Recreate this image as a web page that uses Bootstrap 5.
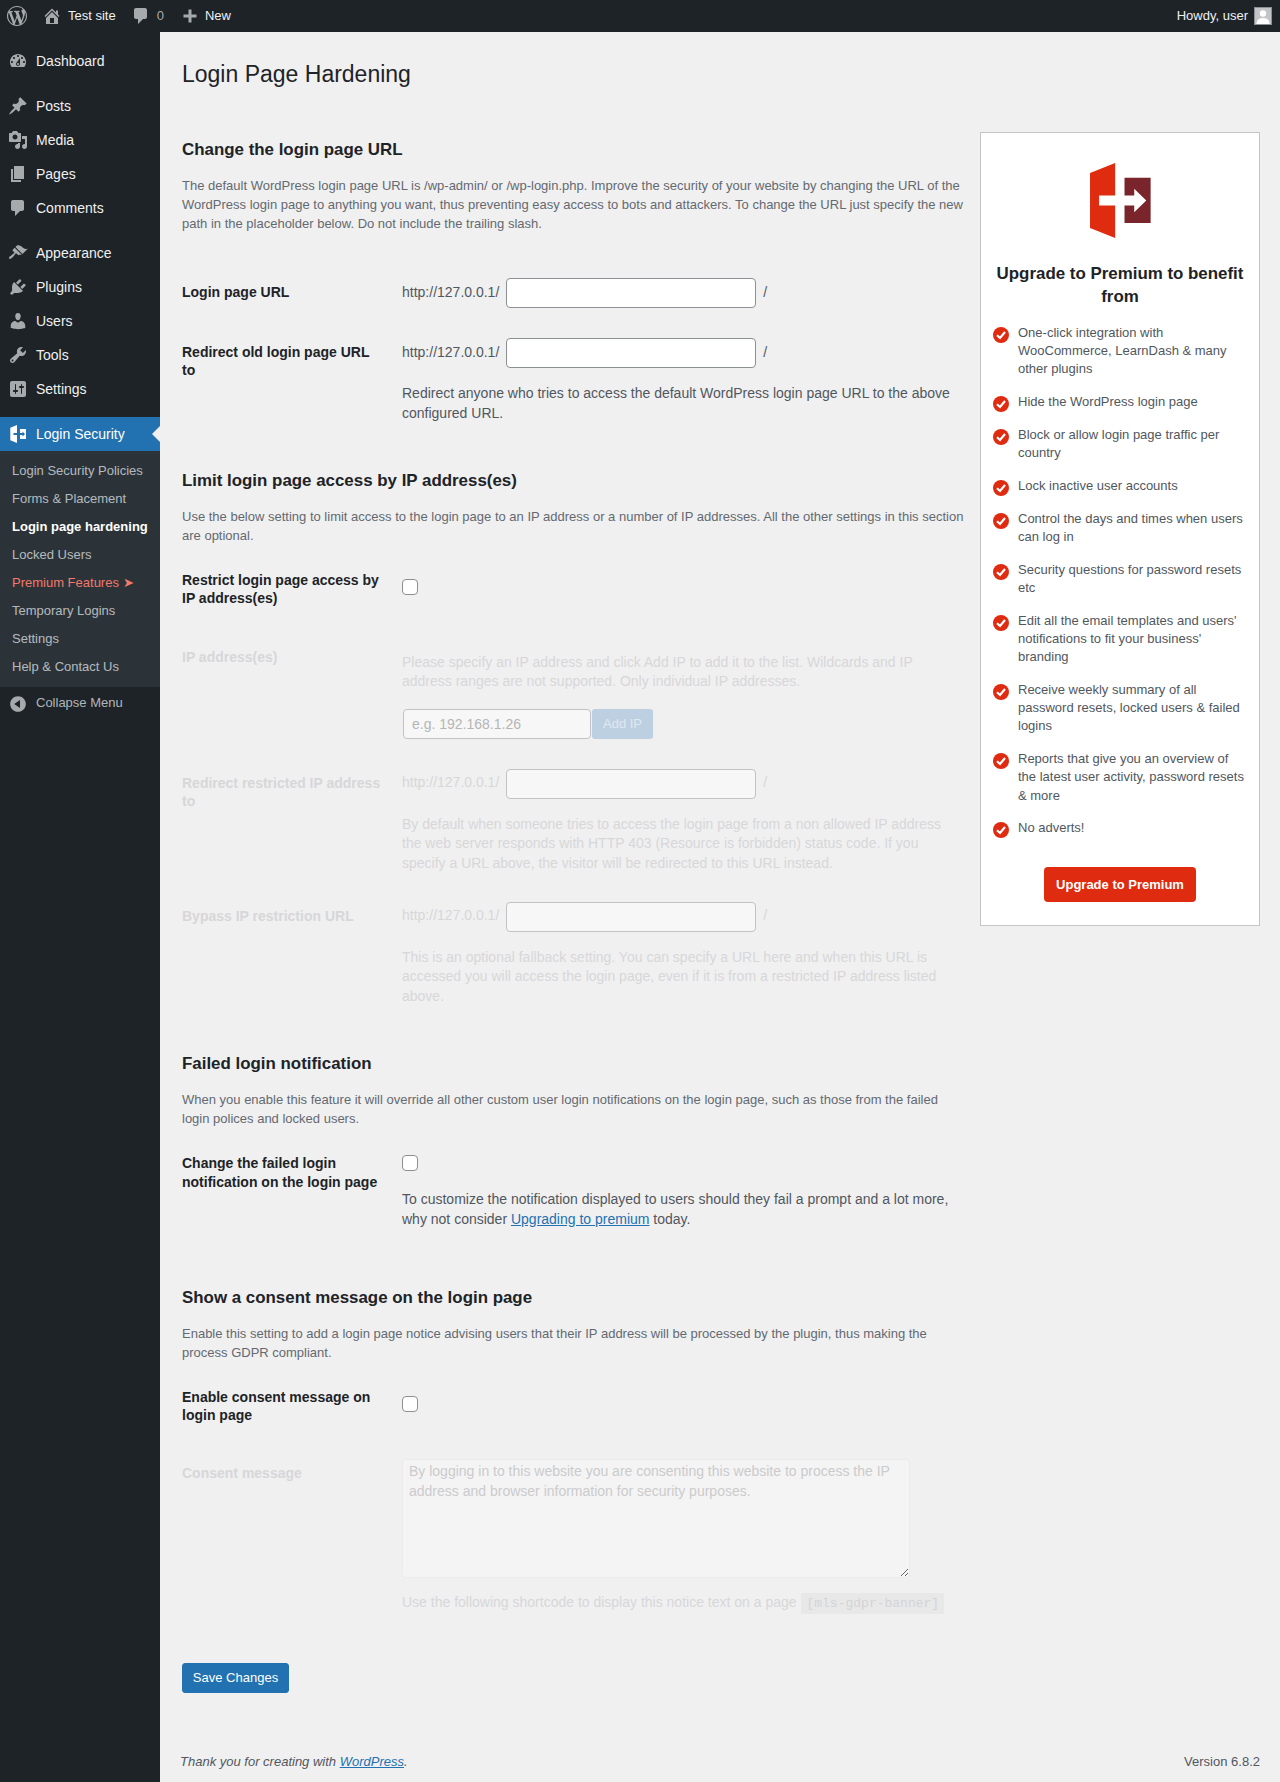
<!DOCTYPE html>
<html lang="en">
<head>
<meta charset="utf-8">
<title>Login Page Hardening</title>
<link href="https://cdn.jsdelivr.net/npm/bootstrap@5.3.0/dist/css/bootstrap.min.css" rel="stylesheet">
<style>
body{font-family:"Liberation Sans",Arial,sans-serif;font-size:13px;line-height:1.4;background:#f0f0f1;color:#3c434a;min-height:1782px}
a{color:#2271b1}
.wpbar{height:32px;background:#1d2327;color:#f0f0f1;font-size:13px;line-height:32px}
.wpbar svg{fill:#a7aaad;display:block;flex:none}
.bar-wp{padding:0 7px;height:32px}
.bar-home{padding-left:8px;gap:6px;height:32px}
.bar-com{padding-left:15px;gap:6px;height:32px}
.bar-new{padding-left:16px;gap:5px;height:32px}
.bar-num{color:#a7aaad}
.bar-user{padding-right:8px}
.ava{width:18px;height:18px;background:#c3c4c7;border:1px solid #8c8f94;margin-left:6px;overflow:hidden}
.ava svg{fill:#fff}
.shell{min-height:1750px}
.sidemenu{width:160px;flex:none;background:#1d2327;padding-top:12px}
.mitem{height:34px;padding-left:8px;font-size:14px;color:#f0f0f1;gap:8px}
.mitem span{padding-top:2px}
.mitem svg{fill:#a7aaad;flex:none;width:20px;height:20px}
.msep{height:11px}
.mactive{background:#2271b1;color:#fff;position:relative}
.mactive svg{fill:#fff}
.mactive::after{content:"";position:absolute;right:0;top:9px;border:8px solid transparent;border-right-color:#f0f0f1;border-left-width:0}
.subm{background:#2c3338;padding:6px 0 6px}
.subm div{height:28px;line-height:28px;padding-left:12px;font-size:13px;color:rgba(240,246,252,.7)}
.subm .subon{color:#fff;font-weight:700}
.subm .subprem{color:#f2796b}
.collapse-row{height:34px;padding-left:8px;gap:8px;color:rgba(240,246,252,.7);font-size:13px}
.collapse-row span{padding-bottom:2px}
.collapse-row svg{fill:#a7aaad;width:20px;height:20px;flex:none}
.mainwrap{flex:1 1 auto;min-width:0;padding:27px 20px 0 22px;position:relative}
.ttl{font-size:23px;font-weight:400;line-height:30px;color:#1d2327;margin:0}
.pane{gap:16px;margin-top:43px}
.leftcol{width:782px;flex:none;padding-top:7px}
.hd2{font-size:16.9px;font-weight:700;line-height:22px;color:#1d2327;margin:0 0 15px}
.descr{font-size:13px;line-height:19px;color:#646970;margin:0}
.lab{width:200px;margin-right:20px;flex:none;font-size:14px;line-height:18.2px;font-weight:700;color:#1d2327}
.lab-in{padding-top:5px}
.val{font-size:14px;line-height:20px;color:#50575e}
.val .vtx{padding-bottom:3px}
.urlbox{width:250px;height:30px;border:1px solid #8c8f94;border-radius:4px;background:#fff;margin:0 7px}
.hint{font-size:14px;line-height:19.6px;color:#50575e;margin:0}
.chk{width:16px;height:16px;border:1px solid #8c8f94;border-radius:4px;background:#fff;display:block;appearance:none;margin:0}
.h-15{margin-top:15px}
.h-16{margin-top:16px}
.h-19{margin-top:19px}
.off{color:#d7d7d8}
.off .urlbox{background:#f7f7f7;border-color:#c2c2c5}
.off .hint{color:#d7d7d8}
.ipbox{width:188px;height:30px;border:1px solid #c2c2c5;border-radius:4px;background:#f7f7f7;padding:0 8px;font-size:14px;color:#b5b5b5;margin-left:1px}
.ipbox::placeholder{color:#b5b5b5;opacity:1}
.ipbtn{width:61px;height:30px;margin-left:1px;border:0;border-radius:3px;background:#bcd0e2;color:#e0e8f0;font-size:13px;padding:0}
.consentbox{display:block;width:508px;height:119px;border:1px solid #ebebec;border-radius:4px;background:#f4f4f4;color:#cbcbcc;font-size:14px;line-height:19.6px;padding:2px 6px}
.consentbox::placeholder{color:#cbcbcc;opacity:1}
.shortc{font-family:"Liberation Mono",monospace;font-size:13px;background:#e8e8e9;color:#d4d4d5;padding:3px 5px;margin-left:1px}
.savebtn{background:#2271b1;color:#fff;border:1px solid #2271b1;border-radius:3px;font-size:13px;line-height:28px;height:30px;width:107px;padding:0;display:block}
.upbox{width:280px;flex:none;background:#fff;border:1px solid #c3c4c7;padding:30px 12px 0;height:794px}
.uplogo{display:block;margin:0 auto}
.upttl{font-size:16.9px;font-weight:700;line-height:23px;color:#1d2327;text-align:center;margin:24px 0 0}
.uplist{margin:16px 0 0;padding:0;list-style:none}
.uplist li{font-size:13px;line-height:18.2px;color:#50575e;padding-left:25px;position:relative;margin-bottom:14.6px}
.uplist li svg{position:absolute;left:0;top:3px}
.upbtn{display:block;width:152px;height:35px;line-height:35px;margin:29px auto 0;background:#df2b10;color:#fff;font-size:13px;font-weight:700;border-radius:4px;text-align:center;text-decoration:none}
.ft{position:absolute;left:20px;right:20px;top:1721px;font-size:13px;color:#50575e}
.m45{margin-top:45px}.m30{margin-top:30px}.m47{margin-top:47px}.m26{margin-top:26px}.m40{margin-top:40px}.m17{margin-top:17px}.m28{margin-top:28px}.m57{margin-top:57px}.m35{margin-top:35px}.m49{margin-top:49px}
.c7{padding-top:8px}.c8{padding-top:1px}
</style>
</head>
<body>
<div class="wpbar d-flex align-items-center justify-content-between">
  <div class="d-flex align-items-center">
    <div class="bar-wp d-flex align-items-center"><svg width="20" height="20" viewBox="0 0 20 20"><path d="M20 10c0-5.51-4.49-10-10-10C4.48 0 0 4.49 0 10c0 5.52 4.48 10 10 10 5.51 0 10-4.48 10-10zM7.78 15.37L4.37 6.22c.55-.02 1.17-.08 1.17-.08.5-.06.44-1.13-.06-1.11 0 0-1.45.11-2.37.11-.18 0-.37 0-.58-.01C4.12 2.69 6.87 1.11 10 1.11c2.33 0 4.45.87 6.05 2.34-.68-.11-1.65.39-1.65 1.58 0 .74.45 1.36.9 2.1.35.61.55 1.36.55 2.46 0 1.49-1.4 5-1.4 5l-3.03-8.37c.54-.02.82-.17.82-.17.5-.05.44-1.25-.06-1.22 0 0-1.44.12-2.38.12-.87 0-2.33-.12-2.33-.12-.5-.03-.56 1.2-.06 1.22l.92.08 1.26 3.41zM17.41 10c.24-.64.74-1.87.43-4.25.7 1.29 1.05 2.71 1.05 4.25 0 3.29-1.73 6.24-4.4 7.78.97-2.59 1.94-5.2 2.92-7.78zM6.1 18.09C3.12 16.65 1.11 13.53 1.11 10c0-1.3.23-2.48.72-3.59C3.25 10.3 4.67 14.2 6.1 18.09zm4.03-6.63l2.58 6.98c-.86.29-1.76.45-2.71.45-.79 0-1.57-.11-2.29-.33.81-2.38 1.62-4.74 2.42-7.1z"/></svg></div>
    <div class="bar-home d-flex align-items-center"><svg width="20" height="20" viewBox="0 0 20 20"><path d="M16 8.500l1.530 1.530-1.060 1.060L10 4.620l-6.470 6.470-1.060-1.060L10 2.500l4 4v-2h2v4zm-6-2.460l6 5.990V18H4v-5.970zM12 17v-5H8v5h4z"/></svg><span>Test site</span></div>
    <div class="bar-com d-flex align-items-center"><svg width="20" height="20" viewBox="0 0 20 20"><path d="M5 2h9c1.100 0 2 .9 2 2v7c0 1.100-.9 2-2 2h-2l-5 5v-5H5c-1.100 0-2-.9-2-2V4c0-1.100.9-2 2-2z"/></svg><span class="bar-num">0</span></div>
    <div class="bar-new d-flex align-items-center"><svg width="20" height="20" viewBox="0 0 20 20"><path d="M16.500 8.500v3h-5v5h-3v-5h-5v-3h5v-5h3v5z"/></svg><span>New</span></div>
  </div>
  <div class="bar-user d-flex align-items-center"><span>Howdy, user</span><div class="ava"><svg width="16" height="16" viewBox="0 0 16 16"><circle cx="8" cy="5.500" r="3.200"/><path d="M1.500 16c0-4 2.500-6 6.500-6s6.500 2 6.500 6z"/></svg></div></div>
</div>
<div class="shell d-flex">
  <nav class="sidemenu d-flex flex-column">
    <div class="mitem d-flex align-items-center"><svg viewBox="0 0 20 20"><path d="M3.760 16h12.480c1.100-1.370 1.760-3.110 1.760-5 0-4.420-3.580-8-8-8s-8 3.580-8 8c0 1.890.66 3.630 1.760 5zM10 4c.55 0 1 .45 1 1s-.45 1-1 1-1-.45-1-1 .45-1 1-1zM6 6c.55 0 1 .45 1 1s-.45 1-1 1-1-.45-1-1 .45-1 1-1zm8 0c.55 0 1 .45 1 1s-.45 1-1 1-1-.45-1-1 .45-1 1-1zm-5.370 5.550L12 7v6c0 1.100-.9 2-2 2s-2-.9-2-2c0-.57.24-1.080.63-1.450zM4 10c.55 0 1 .45 1 1s-.45 1-1 1-1-.45-1-1 .45-1 1-1zm12 0c.55 0 1 .45 1 1s-.45 1-1 1-1-.45-1-1 .45-1 1-1zm-5 3c0-.55-.45-1-1-1s-1 .45-1 1 .45 1 1 1 1-.45 1-1z" fill-rule="evenodd"/></svg><span>Dashboard</span></div>
    <div class="msep"></div>
    <div class="mitem d-flex align-items-center"><svg viewBox="0 0 20 20"><path d="M10.440 3.020l1.820-1.820 6.360 6.350-1.830 1.820c-1.050-.68-2.480-.57-3.410.36l-.75.75c-.92.93-1.040 2.350-.35 3.410l-1.830 1.820-2.410-2.410-2.800 2.790c-.42.42-3.380 2.710-3.800 2.290s1.860-3.390 2.280-3.810l2.790-2.790L4.100 9.360l1.830-1.820c1.050.69 2.480.57 3.400-.36l.75-.75c.93-.92 1.050-2.350.36-3.410z"/></svg><span>Posts</span></div>
    <div class="mitem d-flex align-items-center"><svg viewBox="0 0 20 20"><path fill-rule="evenodd" d="M13 11V4c0-.55-.45-1-1-1h-1.670L9 1H5L3.670 3H2c-.55 0-1 .45-1 1v7c0 .55.45 1 1 1h10c.55 0 1-.45 1-1zM7 4.500c1.380 0 2.500 1.120 2.500 2.500S8.380 9.500 7 9.500 4.500 8.380 4.500 7 5.620 4.500 7 4.500zM14 6h5v10.500c0 1.380-1.120 2.500-2.500 2.500S14 17.880 14 16.500s1.120-2.500 2.500-2.500c.17 0 .34.02.5.05V9h-3V6zm-4 8.050V13h2v3.500c0 1.380-1.120 2.500-2.500 2.500S7 17.880 7 16.500 8.120 14 9.500 14c.17 0 .34.02.5.05z"/></svg><span>Media</span></div>
    <div class="mitem d-flex align-items-center"><svg viewBox="0 0 20 20"><path d="M6 15V2h10v13H6zm-1 1h8v2H3V5h2v11z"/></svg><span>Pages</span></div>
    <div class="mitem d-flex align-items-center"><svg viewBox="0 0 20 20"><path d="M5 2h9c1.100 0 2 .9 2 2v7c0 1.100-.9 2-2 2h-2l-5 5v-5H5c-1.100 0-2-.9-2-2V4c0-1.100.9-2 2-2z"/></svg><span>Comments</span></div>
    <div class="msep"></div>
    <div class="mitem d-flex align-items-center"><svg viewBox="0 0 20 20"><path d="M14.480 11.060L7.410 3.990l1.500-1.500c.5-.56 2.300-.47 3.510.32 1.210.8 1.430 1.280 2.910 2.100 1.180.64 2.450 1.260 4.450.85zm-.71.71L6.700 4.700 4.930 6.470c-.39.39-.39 1.020 0 1.410l1.060 1.060c.39.39.39 1.030 0 1.420-.6.6-1.430 1.110-2.210 1.690-.35.26-.7.53-1.010.84C1.430 13.230.4 14.810 1.200 15.600c.79.8 2.370-.23 3.700-1.570.31-.31.58-.66.85-1.020.57-.78 1.080-1.610 1.690-2.210.39-.39 1.020-.39 1.410 0l1.060 1.060c.39.39 1.020.39 1.410 0z"/></svg><span>Appearance</span></div>
    <div class="mitem d-flex align-items-center"><svg viewBox="0 0 20 20"><path d="M13.110 4.360L9.870 7.600 8 5.730l3.240-3.240c.35-.34 1.050-.2 1.560.32.52.51.66 1.210.31 1.550zm-8 1.770l.91-1.120 9.010 9.010-1.190.84c-.71.71-2.630 1.160-3.820 1.160H6.140L4.900 17.260c-.59.59-1.540.59-2.120 0-.59-.58-.59-1.530 0-2.120l1.240-1.240v-3.880c0-1.130.4-3.190 1.090-3.890zm7.260 3.970l3.240-3.240c.34-.35 1.040-.21 1.550.31.52.51.66 1.210.31 1.550l-3.240 3.250z"/></svg><span>Plugins</span></div>
    <div class="mitem d-flex align-items-center"><svg viewBox="0 0 20 20"><path d="M10 9.250c-2.270 0-2.730-3.440-2.730-3.440C7 4.020 7.820 2 9.970 2c2.160 0 2.980 2.020 2.710 3.810 0 0-.41 3.440-2.680 3.440zm0 2.570L12.720 10c2.390 0 4.520 2.330 4.520 4.530v2.490s-3.650 1.130-7.240 1.130c-3.650 0-7.240-1.130-7.240-1.130v-2.490c0-2.250 1.940-4.480 4.470-4.480z"/></svg><span>Users</span></div>
    <div class="mitem d-flex align-items-center"><svg viewBox="0 0 20 20"><path fill-rule="evenodd" d="M16.680 9.770c-1.340 1.340-3.300 1.670-4.950.99l-5.410 6.520c-.99.99-2.590.99-3.580 0s-.99-2.590 0-3.570l6.520-5.420c-.68-1.650-.35-3.610.99-4.950 1.280-1.280 3.120-1.620 4.720-1.060l-2.890 2.890 2.820 2.820 2.860-2.870c.53 1.580.18 3.390-1.080 4.650zM3.810 16.210c.4.39 1.040.39 1.430 0 .4-.4.4-1.040 0-1.430-.39-.4-1.030-.4-1.430 0-.39.39-.39 1.030 0 1.430z"/></svg><span>Tools</span></div>
    <div class="mitem d-flex align-items-center"><svg viewBox="0 0 20 20"><path fill-rule="evenodd" d="M18 16V4c0-1.100-.9-2-2-2H4c-1.100 0-2 .9-2 2v12c0 1.100.9 2 2 2h12c1.100 0 2-.9 2-2zM8 11h1c.55 0 1 .45 1 1s-.45 1-1 1H8v1.500c0 .28-.22.5-.5.5s-.5-.22-.5-.5V13H6c-.55 0-1-.45-1-1s.45-1 1-1h1V5.500c0-.28.22-.5.5-.5s.5.22.5.5V11zm5-2h-1c-.55 0-1-.45-1-1s.45-1 1-1h1V5.500c0-.28.22-.5.5-.5s.5.22.5.5V7h1c.55 0 1 .45 1 1s-.45 1-1 1h-1v5.500c0 .28-.22.5-.5.5s-.5-.22-.5-.5V9z"/></svg><span>Settings</span></div>
    <div class="msep"></div>
    <div class="mitem mactive d-flex align-items-center"><svg viewBox="0 0 20 20"><path d="M2.300 3.800 9 1v8H5.500v2H9v8l-6.700-2.800z"/><path fill-rule="evenodd" d="M12 5h6v10h-6v-4h2.500v1.500L17 10l-2.500-2.500V9H12z"/></svg><span>Login Security</span></div>
    <div class="subm">
      <div>Login Security Policies</div>
      <div>Forms &amp; Placement</div>
      <div class="subon">Login page hardening</div>
      <div>Locked Users</div>
      <div class="subprem">Premium Features ➤</div>
      <div>Temporary Logins</div>
      <div>Settings</div>
      <div>Help &amp; Contact Us</div>
    </div>
    <div class="collapse-row d-flex align-items-center"><svg viewBox="0 0 20 20"><path fill-rule="evenodd" d="M10 2.160c4.330 0 7.840 3.510 7.840 7.840s-3.510 7.840-7.840 7.840S2.160 14.330 2.160 10 5.710 2.160 10 2.160zm2 11.720V6.120L6.180 9.970z"/></svg><span>Collapse Menu</span></div>
  </nav>
  <main class="mainwrap">
    <h1 class="ttl">Login Page Hardening</h1>
    <div class="pane d-flex align-items-start">
      <div class="leftcol">
        <h2 class="hd2">Change the login page URL</h2>
        <p class="descr">The default WordPress login page URL is /wp-admin/ or /wp-login.php. Improve the security of your website by changing the URL of the WordPress login page to anything you want, thus preventing easy access to bots and attackers. To change the URL just specify the new path in the placeholder below. Do not include the trailing slash.</p>
        <div class="d-flex m45">
          <div class="lab lab-in">Login page URL</div>
          <div class="val d-flex align-items-center"><span class="vtx">http://127.0.0.1/</span><span class="urlbox"></span><span class="vtx">/</span></div>
        </div>
        <div class="d-flex m30">
          <div class="lab lab-in">Redirect old login page URL to</div>
          <div>
            <div class="val d-flex align-items-center"><span class="vtx">http://127.0.0.1/</span><span class="urlbox"></span><span class="vtx">/</span></div>
            <p class="hint h-16">Redirect anyone who tries to access the default WordPress login page URL to the above configured URL.</p>
          </div>
        </div>
        <h2 class="hd2 m47">Limit login page access by IP address(es)</h2>
        <p class="descr">Use the below setting to limit access to the login page to an IP address or a number of IP addresses. All the other settings in this section are optional.</p>
        <div class="d-flex m26">
          <div class="lab">Restrict login page access by IP address(es)</div>
          <div class="c7"><input class="chk" type="checkbox"></div>
        </div>
        <div class="off">
          <div class="d-flex m40">
            <div class="lab off">IP address(es)</div>
            <div>
              <p class="hint lab-in">Please specify an IP address and click Add IP to add it to the list. Wildcards and IP address ranges are not supported. Only individual IP addresses.</p>
              <div class="d-flex m17"><input class="ipbox" placeholder="e.g. 192.168.1.26"><button class="ipbtn">Add IP</button></div>
            </div>
          </div>
          <div class="d-flex m30">
            <div class="lab off lab-in">Redirect restricted IP address to</div>
            <div>
              <div class="val off d-flex align-items-center"><span class="vtx off">http://127.0.0.1/</span><span class="urlbox"></span><span class="vtx off">/</span></div>
              <p class="hint h-16">By default when someone tries to access the login page from a non allowed IP address the web server responds with HTTP 403 (Resource is forbidden) status code. If you specify a URL above, the visitor will be redirected to this URL instead.</p>
            </div>
          </div>
          <div class="d-flex m28">
            <div class="lab off lab-in">Bypass IP restriction URL</div>
            <div>
              <div class="val off d-flex align-items-center"><span class="vtx off">http://127.0.0.1/</span><span class="urlbox"></span><span class="vtx off">/</span></div>
              <p class="hint h-16">This is an optional fallback setting. You can specify a URL here and when this URL is accessed you will access the login page, even if it is from a restricted IP address listed above.</p>
            </div>
          </div>
        </div>
        <h2 class="hd2 m47">Failed login notification</h2>
        <p class="descr">When you enable this feature it will override all other custom user login notifications on the login page, such as those from the failed login polices and locked users.</p>
        <div class="d-flex m26">
          <div class="lab">Change the failed login notification on the login page</div>
          <div>
            <div class="c8"><input class="chk" type="checkbox"></div>
            <p class="hint h-19">To customize the notification displayed to users should they fail a prompt and a lot more, why not consider <a href="#">Upgrading to premium</a> today.</p>
          </div>
        </div>
        <h2 class="hd2 m57">Show a consent message on the login page</h2>
        <p class="descr">Enable this setting to add a login page notice advising users that their IP address will be processed by the plugin, thus making the process GDPR compliant.</p>
        <div class="d-flex m26">
          <div class="lab">Enable consent message on login page</div>
          <div class="c7"><input class="chk" type="checkbox"></div>
        </div>
        <div class="off">
          <div class="d-flex m35">
            <div class="lab off lab-in">Consent message</div>
            <div>
              <textarea class="consentbox" placeholder="By logging in to this website you are consenting this website to process the IP address and browser information for security purposes."></textarea>
              <p class="hint h-15">Use the following shortcode to display this notice text on a page <code class="shortc">[mls-gdpr-banner]</code></p>
            </div>
          </div>
        </div>
        <button class="savebtn m49">Save Changes</button>
      </div>
      <aside class="upbox">
        <svg class="uplogo" width="61" height="75" viewBox="360 128 182 224"><path fill="#df2b10" d="M360 158 435 128V225H387V255H435V352L360 322z"/><path fill="#7a252b" d="M463 172H541V307H463V255H492V275L528 240 492 205V225H463z"/></svg>
        <h3 class="upttl">Upgrade to Premium to benefit from</h3>
        <ul class="uplist">
          <li><svg width="16" height="16" viewBox="0 0 16 16"><circle cx="8" cy="8" r="8" fill="#df2b10"/><path d="M4 8.200 7 11l5-6" fill="none" stroke="#fff" stroke-width="2.200"/></svg>One-click integration with WooCommerce, LearnDash &amp; many other plugins</li>
          <li><svg width="16" height="16" viewBox="0 0 16 16"><circle cx="8" cy="8" r="8" fill="#df2b10"/><path d="M4 8.200 7 11l5-6" fill="none" stroke="#fff" stroke-width="2.200"/></svg>Hide the WordPress login page</li>
          <li><svg width="16" height="16" viewBox="0 0 16 16"><circle cx="8" cy="8" r="8" fill="#df2b10"/><path d="M4 8.200 7 11l5-6" fill="none" stroke="#fff" stroke-width="2.200"/></svg>Block or allow login page traffic per country</li>
          <li><svg width="16" height="16" viewBox="0 0 16 16"><circle cx="8" cy="8" r="8" fill="#df2b10"/><path d="M4 8.200 7 11l5-6" fill="none" stroke="#fff" stroke-width="2.200"/></svg>Lock inactive user accounts</li>
          <li><svg width="16" height="16" viewBox="0 0 16 16"><circle cx="8" cy="8" r="8" fill="#df2b10"/><path d="M4 8.200 7 11l5-6" fill="none" stroke="#fff" stroke-width="2.200"/></svg>Control the days and times when users can log in</li>
          <li><svg width="16" height="16" viewBox="0 0 16 16"><circle cx="8" cy="8" r="8" fill="#df2b10"/><path d="M4 8.200 7 11l5-6" fill="none" stroke="#fff" stroke-width="2.200"/></svg>Security questions for password resets etc</li>
          <li><svg width="16" height="16" viewBox="0 0 16 16"><circle cx="8" cy="8" r="8" fill="#df2b10"/><path d="M4 8.200 7 11l5-6" fill="none" stroke="#fff" stroke-width="2.200"/></svg>Edit all the email templates and users' notifications to fit your business' branding</li>
          <li><svg width="16" height="16" viewBox="0 0 16 16"><circle cx="8" cy="8" r="8" fill="#df2b10"/><path d="M4 8.200 7 11l5-6" fill="none" stroke="#fff" stroke-width="2.200"/></svg>Receive weekly summary of all password resets, locked users &amp; failed logins</li>
          <li><svg width="16" height="16" viewBox="0 0 16 16"><circle cx="8" cy="8" r="8" fill="#df2b10"/><path d="M4 8.200 7 11l5-6" fill="none" stroke="#fff" stroke-width="2.200"/></svg>Reports that give you an overview of the latest user activity, password resets &amp; more</li>
          <li><svg width="16" height="16" viewBox="0 0 16 16"><circle cx="8" cy="8" r="8" fill="#df2b10"/><path d="M4 8.200 7 11l5-6" fill="none" stroke="#fff" stroke-width="2.200"/></svg>No adverts!</li>
        </ul>
        <a class="upbtn" href="#">Upgrade to Premium</a>
      </aside>
    </div>
    <footer class="ft d-flex justify-content-between"><em>Thank you for creating with <a href="#">WordPress</a>.</em><span>Version 6.8.2</span></footer>
  </main>
</div>
<script src="https://cdn.jsdelivr.net/npm/bootstrap@5.3.0/dist/js/bootstrap.bundle.min.js"></script>
</body>
</html>
